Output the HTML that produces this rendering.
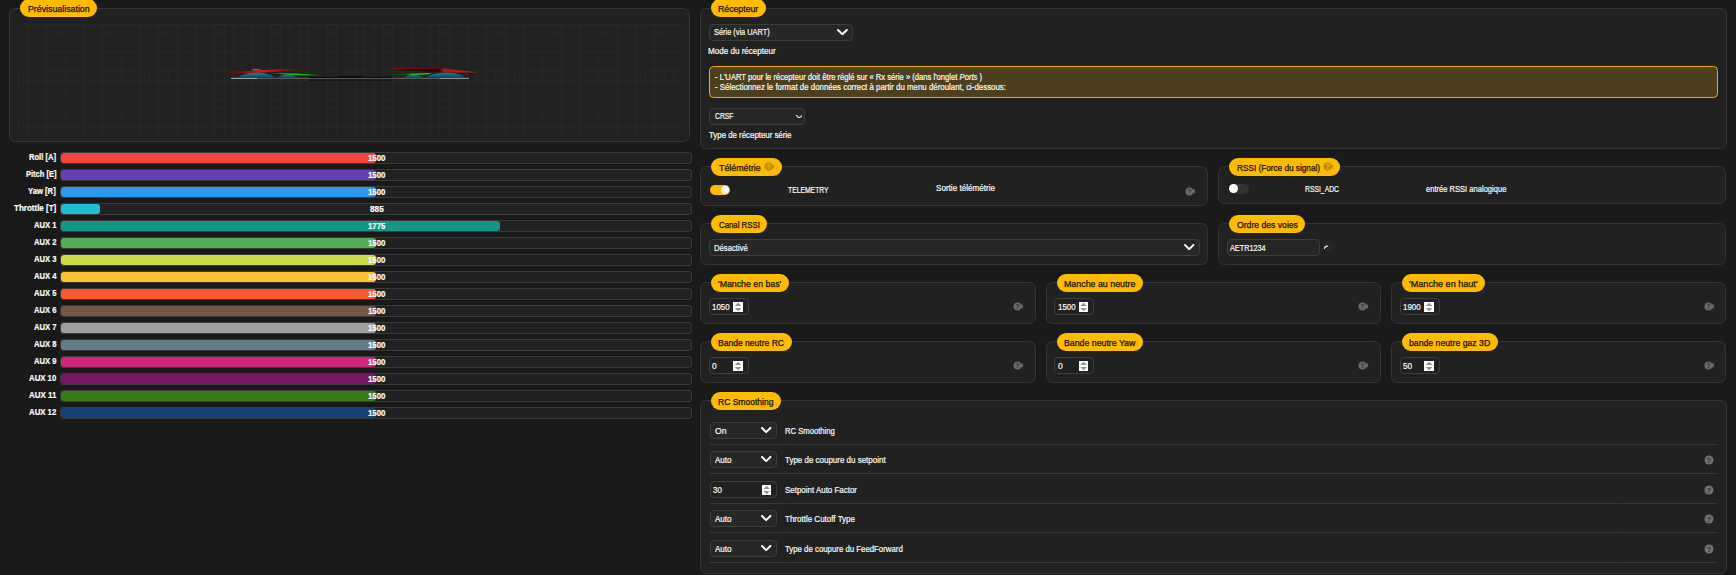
<!DOCTYPE html>
<html lang="fr"><head><meta charset="utf-8"><title>Récepteur</title><style>
*{box-sizing:border-box;margin:0;padding:0}
html,body{width:1736px;height:575px;overflow:hidden;background:#191919;color:#fff;
 font-family:"Liberation Sans","DejaVu Sans",sans-serif;font-size:8.4px;}
body{position:relative}
div,span,svg{position:absolute}
.box{background:#212121;border:1px solid #343434;border-radius:6.5px}
.lbl{background:#ffbb00;border-radius:9.2px}
.t{white-space:nowrap;transform-origin:0 50%;color:#fafafa;-webkit-text-stroke:0.2px #fafafa}
.lt{color:#171000;-webkit-text-stroke:0.25px #171000}
.sel{background:#272727;border:1px solid #3d3d3d;border-radius:4px}
.num{background:#212121;border:1px solid #3d3d3d;border-radius:4px}
.spin{background:#fff}
.note{background:#4d3e1c;border:1px solid #f0ae00;border-radius:4.5px}
.track{background:#212121;border:1px solid #3a3a3a;border-radius:3px}
.fill{left:0;top:0;height:10px;border-radius:3px}
.hr{height:1px;background:#393939}
.tog{border-radius:5px}
.tog i{position:absolute;border-radius:50%;background:#fff}
</style></head><body>
<div class="box" style="left:9px;top:8px;width:681px;height:134px;"></div>
<div style="left:18px;top:24px;width:664.6px;height:110.5px;background-image:linear-gradient(to right,#272727 1px,transparent 1px),linear-gradient(to bottom,#272727 1px,transparent 1px);background-size:9.36px 9.36px"></div>
<svg style="left:200px;top:40px" width="300" height="70" viewBox="200 40 300 70">
<defs>
<linearGradient id="gl" x1="0" x2="1" y1="0" y2="0"><stop offset="0" stop-color="#5a0606"/><stop offset=".3" stop-color="#a80f0f"/><stop offset=".45" stop-color="#d61a1a"/><stop offset=".7" stop-color="#b01010"/><stop offset="1" stop-color="#4a0505"/></linearGradient>
<linearGradient id="gr" x1="0" x2="1" y1="0" y2="0"><stop offset="0" stop-color="#7a0a0a"/><stop offset=".12" stop-color="#3a0404"/><stop offset=".55" stop-color="#1c0000"/><stop offset=".6" stop-color="#b81212"/><stop offset="1" stop-color="#cc1616"/></linearGradient>
<linearGradient id="gg1" x1="0" x2="1" y1="0" y2="0"><stop offset="0" stop-color="#0a4a0a"/><stop offset=".3" stop-color="#12b812"/><stop offset=".75" stop-color="#14c414"/><stop offset="1" stop-color="#0a500a"/></linearGradient>
<linearGradient id="gg2" x1="0" x2="1" y1="0" y2="0"><stop offset="0" stop-color="#083808"/><stop offset=".5" stop-color="#0a560a"/><stop offset=".62" stop-color="#16c416"/><stop offset="1" stop-color="#18c818"/></linearGradient>
<linearGradient id="gb" x1="0" x2="0" y1="0" y2="1"><stop offset="0" stop-color="#1d7c9a"/><stop offset="1" stop-color="#0d4c63"/></linearGradient>
</defs>
<rect x="231" y="77.9" width="238" height="0.9" fill="#6c6c6c"/>
<rect x="231" y="77.9" width="26" height="0.9" fill="#b4b4b4"/>
<rect x="440" y="77.9" width="29" height="0.9" fill="#a0a0a0"/>
<rect x="309" y="76.9" width="83" height="1.1" fill="#070707"/>
<rect x="340" y="76.3" width="22" height="1.2" fill="#040404"/>
<rect x="309" y="79.7" width="83" height="0.9" fill="#0a0a0a"/>
<path d="M238 77.6 C240 75.5 248 72.6 256.500 72.6 C265 72.6 273 75.500 275 77.6 Z" fill="url(#gb)"/>
<path d="M277 77.7 Q287.500 70.6 298 77.7 Z" fill="url(#gb)"/>
<ellipse cx="256" cy="69.8" rx="4.2" ry="1.1" fill="#1d7c9a"/>
<path d="M403 77.7 Q413.500 72.0 424 77.7 Z" fill="url(#gb)"/>
<path d="M426 77.6 C428 75.5 437 72.6 446 72.6 C455 72.6 463 75.500 465 77.6 Z" fill="url(#gb)"/>
<ellipse cx="445.500" cy="69.8" rx="4.5" ry="1.1" fill="#1d7c9a"/>
<path d="M269 73 L296 73.6 L320.500 75.1 L320.500 75.5 L290 75 Z" fill="url(#gg1)"/>
<path d="M381 74.8 L410 73.6 L432 72.9 L428 74.6 L405 75.3 Z" fill="url(#gg2)"/>
<path d="M225 72.4 L256 70.3 L307.500 68.6 L307.500 69 L262 72.6 L240 73 Z" fill="url(#gl)"/>
<path d="M390 68.4 L440 68.1 L479 72.5 L462 72.5 L440 72.2 L402 70.3 Z" fill="url(#gr)"/>
<path d="M390 68.3 L440 68 L441 68.6 L392 68.9 Z" fill="#a01010"/>
</svg>
<div class="lbl" style="left:20px;top:-1.3px;width:77px;height:18.3px;"></div>
<span class="t lt" style="left:27.65px;top:2.9px;line-height:12px;font-size:8.3px;transform:scaleX(1.0606);">Prévisualisation</span>
<span class="t" style="left:29px;top:151px;line-height:12px;font-size:8.3px;transform:scaleX(0.9152);font-weight:700;color:#fff;">Roll [A]</span>
<div class="track" style="left:60px;top:152px;width:632px;height:12px"><div class="fill" style="width:315.0px;background:#f1453d"></div></div>
<span class="t" style="left:367.65px;top:152.2px;line-height:12px;font-size:8.3px;transform:scaleX(0.9425);font-weight:700;color:#fff;">1500</span>
<span class="t" style="left:25.5px;top:168px;line-height:12px;font-size:8.3px;transform:scaleX(0.9061);font-weight:700;color:#fff;">Pitch [E]</span>
<div class="track" style="left:60px;top:169px;width:632px;height:12px"><div class="fill" style="width:315.0px;background:#673fb4"></div></div>
<span class="t" style="left:367.65px;top:169.2px;line-height:12px;font-size:8.3px;transform:scaleX(0.9425);font-weight:700;color:#fff;">1500</span>
<span class="t" style="left:28.3px;top:185px;line-height:12px;font-size:8.3px;transform:scaleX(0.9240);font-weight:700;color:#fff;">Yaw [R]</span>
<div class="track" style="left:60px;top:186px;width:632px;height:12px"><div class="fill" style="width:315.0px;background:#2b98f0"></div></div>
<span class="t" style="left:367.65px;top:186.2px;line-height:12px;font-size:8.3px;transform:scaleX(0.9425);font-weight:700;color:#fff;">1500</span>
<span class="t" style="left:13.7px;top:202px;line-height:12px;font-size:8.3px;transform:scaleX(0.9660);font-weight:700;color:#fff;">Throttle [T]</span>
<div class="track" style="left:60px;top:203px;width:632px;height:12px"><div class="fill" style="width:39.2px;background:#1fbcd2"></div></div>
<span class="t" style="left:369.5px;top:203.2px;line-height:12px;font-size:8.3px;transform:scaleX(0.9894);font-weight:700;color:#fff;">885</span>
<span class="t" style="left:33.5px;top:219px;line-height:12px;font-size:8.3px;transform:scaleX(0.9204);font-weight:700;color:#fff;">AUX 1</span>
<div class="track" style="left:60px;top:220px;width:632px;height:12px"><div class="fill" style="width:438.7px;background:#159588"></div></div>
<span class="t" style="left:367.65px;top:220.2px;line-height:12px;font-size:8.3px;transform:scaleX(0.9425);font-weight:700;color:#fff;">1775</span>
<span class="t" style="left:33.5px;top:236px;line-height:12px;font-size:8.3px;transform:scaleX(0.9204);font-weight:700;color:#fff;">AUX 2</span>
<div class="track" style="left:60px;top:237px;width:632px;height:12px"><div class="fill" style="width:315.0px;background:#50ae55"></div></div>
<span class="t" style="left:367.65px;top:237.2px;line-height:12px;font-size:8.3px;transform:scaleX(0.9425);font-weight:700;color:#fff;">1500</span>
<span class="t" style="left:33.5px;top:253px;line-height:12px;font-size:8.3px;transform:scaleX(0.9204);font-weight:700;color:#fff;">AUX 3</span>
<div class="track" style="left:60px;top:254px;width:632px;height:12px"><div class="fill" style="width:315.0px;background:#cdda49"></div></div>
<span class="t" style="left:367.65px;top:254.2px;line-height:12px;font-size:8.3px;transform:scaleX(0.9425);font-weight:700;color:#fff;">1500</span>
<span class="t" style="left:33.5px;top:270px;line-height:12px;font-size:8.3px;transform:scaleX(0.9204);font-weight:700;color:#fff;">AUX 4</span>
<div class="track" style="left:60px;top:271px;width:632px;height:12px"><div class="fill" style="width:315.0px;background:#fdc02f"></div></div>
<span class="t" style="left:367.65px;top:271.2px;line-height:12px;font-size:8.3px;transform:scaleX(0.9425);font-weight:700;color:#fff;">1500</span>
<span class="t" style="left:33.5px;top:287px;line-height:12px;font-size:8.3px;transform:scaleX(0.9204);font-weight:700;color:#fff;">AUX 5</span>
<div class="track" style="left:60px;top:288px;width:632px;height:12px"><div class="fill" style="width:315.0px;background:#fc5830"></div></div>
<span class="t" style="left:367.65px;top:288.2px;line-height:12px;font-size:8.3px;transform:scaleX(0.9425);font-weight:700;color:#fff;">1500</span>
<span class="t" style="left:33.5px;top:304px;line-height:12px;font-size:8.3px;transform:scaleX(0.9204);font-weight:700;color:#fff;">AUX 6</span>
<div class="track" style="left:60px;top:305px;width:632px;height:12px"><div class="fill" style="width:315.0px;background:#785549"></div></div>
<span class="t" style="left:367.65px;top:305.2px;line-height:12px;font-size:8.3px;transform:scaleX(0.9425);font-weight:700;color:#fff;">1500</span>
<span class="t" style="left:33.5px;top:321px;line-height:12px;font-size:8.3px;transform:scaleX(0.9204);font-weight:700;color:#fff;">AUX 7</span>
<div class="track" style="left:60px;top:322px;width:632px;height:12px"><div class="fill" style="width:315.0px;background:#9e9e9e"></div></div>
<span class="t" style="left:367.65px;top:322.2px;line-height:12px;font-size:8.3px;transform:scaleX(0.9425);font-weight:700;color:#fff;">1500</span>
<span class="t" style="left:33.5px;top:338px;line-height:12px;font-size:8.3px;transform:scaleX(0.9204);font-weight:700;color:#fff;">AUX 8</span>
<div class="track" style="left:60px;top:339px;width:632px;height:12px"><div class="fill" style="width:315.0px;background:#617d8a"></div></div>
<span class="t" style="left:367.65px;top:339.2px;line-height:12px;font-size:8.3px;transform:scaleX(0.9425);font-weight:700;color:#fff;">1500</span>
<span class="t" style="left:33.5px;top:355px;line-height:12px;font-size:8.3px;transform:scaleX(0.9204);font-weight:700;color:#fff;">AUX 9</span>
<div class="track" style="left:60px;top:356px;width:632px;height:12px"><div class="fill" style="width:315.0px;background:#cf267d"></div></div>
<span class="t" style="left:367.65px;top:356.2px;line-height:12px;font-size:8.3px;transform:scaleX(0.9425);font-weight:700;color:#fff;">1500</span>
<span class="t" style="left:28.7px;top:372px;line-height:12px;font-size:8.3px;transform:scaleX(0.9394);font-weight:700;color:#fff;">AUX 10</span>
<div class="track" style="left:60px;top:373px;width:632px;height:12px"><div class="fill" style="width:315.0px;background:#7a1464"></div></div>
<span class="t" style="left:367.65px;top:373.2px;line-height:12px;font-size:8.3px;transform:scaleX(0.9425);font-weight:700;color:#fff;">1500</span>
<span class="t" style="left:28.7px;top:389px;line-height:12px;font-size:8.3px;transform:scaleX(0.9544);font-weight:700;color:#fff;">AUX 11</span>
<div class="track" style="left:60px;top:390px;width:632px;height:12px"><div class="fill" style="width:315.0px;background:#3a7a14"></div></div>
<span class="t" style="left:367.65px;top:390.2px;line-height:12px;font-size:8.3px;transform:scaleX(0.9425);font-weight:700;color:#fff;">1500</span>
<span class="t" style="left:28.7px;top:406px;line-height:12px;font-size:8.3px;transform:scaleX(0.9394);font-weight:700;color:#fff;">AUX 12</span>
<div class="track" style="left:60px;top:407px;width:632px;height:12px"><div class="fill" style="width:315.0px;background:#14407a"></div></div>
<span class="t" style="left:367.65px;top:407.2px;line-height:12px;font-size:8.3px;transform:scaleX(0.9425);font-weight:700;color:#fff;">1500</span>
<div class="box" style="left:700px;top:8px;width:1027px;height:141px;"></div>
<div class="lbl" style="left:710.8px;top:-1.3px;width:55.4px;height:18.3px;"></div>
<span class="t lt" style="left:718.35px;top:2.9px;line-height:12px;font-size:8.3px;transform:scaleX(1.0511);">Récepteur</span>
<div class="sel" style="left:709px;top:24px;width:144px;height:17px;"></div>
<span class="t" style="left:713.7px;top:26.4px;line-height:12px;font-size:8.4px;transform:scaleX(0.8828);">Série (via UART)</span>
<svg style="left:837px;top:29.2px" width="10.8" height="6.2" viewBox="0 0 10.8 6.2"><path d="M0.95 0.95 L5.4 5.25 L9.85 0.95" fill="none" stroke="#fff" stroke-width="1.9" stroke-linecap="round" stroke-linejoin="round"/></svg>
<span class="t" style="left:708.4px;top:44.6px;line-height:12px;font-size:8.4px;transform:scaleX(0.9631);">Mode du récepteur</span>
<div class="note" style="left:709px;top:66px;width:1009px;height:32px;"></div>
<span class="t" style="left:714.5px;top:71.6px;line-height:10px;font-size:8.4px;transform:scaleX(0.9117);">- L'UART pour le récepteur doit être réglé sur « Rx série » (dans l'onglet <i>Ports</i> )</span>
<span class="t" style="left:714.5px;top:81.8px;line-height:10px;font-size:8.4px;transform:scaleX(0.9398);">- Sélectionnez le format de données correct à partir du menu déroulant, ci-dessous:</span>
<div class="sel" style="left:709px;top:108px;width:96px;height:17px;"></div>
<span class="t" style="left:714.5px;top:110.4px;line-height:12px;font-size:8.4px;transform:scaleX(0.8090);">CRSF</span>
<svg style="left:795.8px;top:114.6px" width="6.4" height="3.8" viewBox="0 0 6.4 3.8"><path d="M0.6 0.6 L3.2 3.2 L5.8 0.6" fill="none" stroke="#e6e6e6" stroke-width="1.2" stroke-linecap="round" stroke-linejoin="round"/></svg>
<span class="t" style="left:708.5px;top:128.8px;line-height:12px;font-size:8.4px;transform:scaleX(0.9372);">Type de récepteur série</span>
<div class="box" style="left:700px;top:166px;width:508px;height:40px;"></div>
<div class="lbl" style="left:710.8px;top:157.8px;width:71.3px;height:18.3px;"></div>
<span class="t lt" style="left:718.55px;top:162px;line-height:12px;font-size:8.3px;transform:scaleX(1.0650);">Télémétrie</span>
<svg style="left:764.2px;top:162.35px" width="12.2" height="9.2" viewBox="-4.6 -4.6 12.2 9.2"><circle r="4.1" fill="#c08c00"/><path d="M2.9 -1.43 L5.8 -2.25 L5.5 2.25 L2.9 1.43 Z" fill="#c08c00"/><text x="0" y="2.54" text-anchor="middle" font-family="Liberation Sans, sans-serif" font-weight="700" font-size="6.72" fill="#ffbb00">?</text></svg>
<div class="tog" style="left:709.8px;top:184.8px;width:20.3px;height:10.2px;background:#ffbb00"><i style="left:11px;top:0.8px;width:8.6px;height:8.6px"></i></div>
<span class="t" style="left:787.8px;top:184.1px;line-height:12px;font-size:8.4px;transform:scaleX(0.8099);">TELEMETRY</span>
<span class="t" style="left:936.3px;top:181.9px;line-height:12px;font-size:8.4px;transform:scaleX(0.9680);">Sortie télémétrie</span>
<svg style="left:1185.15px;top:186.75px" width="11.9" height="8.9" viewBox="-4.45 -4.45 11.9 8.9"><circle r="3.95" fill="#6a6a6a"/><path d="M2.75 -1.38 L5.65 -2.17 L5.35 2.17 L2.75 1.38 Z" fill="#6a6a6a"/><text x="0" y="2.45" text-anchor="middle" font-family="Liberation Sans, sans-serif" font-weight="700" font-size="6.48" fill="#333">?</text></svg>
<div class="box" style="left:1218px;top:166px;width:508px;height:38px;"></div>
<div class="lbl" style="left:1228.9px;top:157.8px;width:111.2px;height:18.3px;"></div>
<span class="t lt" style="left:1236.75px;top:162px;line-height:12px;font-size:8.3px;transform:scaleX(0.9893);">RSSI (Force du signal)</span>
<svg style="left:1323px;top:162.35px" width="12.2" height="9.2" viewBox="-4.6 -4.6 12.2 9.2"><circle r="4.1" fill="#c08c00"/><path d="M2.9 -1.43 L5.8 -2.25 L5.5 2.25 L2.9 1.43 Z" fill="#c08c00"/><text x="0" y="2.54" text-anchor="middle" font-family="Liberation Sans, sans-serif" font-weight="700" font-size="6.72" fill="#ffbb00">?</text></svg>
<div class="tog" style="left:1228.9px;top:184.2px;width:20px;height:9.6px;background:#323232"><i style="left:0;top:0.3px;width:9px;height:9px"></i></div>
<span class="t" style="left:1304.6px;top:182.9px;line-height:12px;font-size:8.4px;transform:scaleX(0.8117);">RSSI_ADC</span>
<span class="t" style="left:1426.4px;top:182.7px;line-height:12px;font-size:8.4px;transform:scaleX(0.9037);">entrée RSSI analogique</span>
<div class="box" style="left:700px;top:223px;width:508px;height:42px;"></div>
<div class="lbl" style="left:710.9px;top:214.9px;width:56.2px;height:18.3px;"></div>
<span class="t lt" style="left:718.55px;top:219.1px;line-height:12px;font-size:8.3px;transform:scaleX(0.9420);">Canal RSSI</span>
<div class="sel" style="left:709px;top:239px;width:491px;height:17px;"></div>
<span class="t" style="left:714.3px;top:241.8px;line-height:12px;font-size:8.4px;transform:scaleX(0.9192);">Désactivé</span>
<svg style="left:1184.3px;top:244.2px" width="10.4" height="6.2" viewBox="0 0 10.4 6.2"><path d="M0.95 0.95 L5.2 5.25 L9.45 0.95" fill="none" stroke="#fff" stroke-width="1.9" stroke-linecap="round" stroke-linejoin="round"/></svg>
<div class="box" style="left:1218px;top:223px;width:508px;height:42px;"></div>
<div class="lbl" style="left:1228.9px;top:214.9px;width:76px;height:18.3px;"></div>
<span class="t lt" style="left:1236.75px;top:219.1px;line-height:12px;font-size:8.3px;transform:scaleX(1.0404);">Ordre des voies</span>
<div class="num" style="left:1227px;top:239px;width:93px;height:17px;background:#262626"></div>
<span class="t" style="left:1230.2px;top:241.8px;line-height:12px;font-size:8.4px;transform:scaleX(0.8689);">AETR1234</span>
<svg style="left:1322px;top:240px" width="14" height="14" viewBox="1322 240 14 14"><circle cx="1328.600" cy="246.900" r="5.600" fill="#262626"/><path d="M1323.800 248.400 Q1324.200 245.800 1327.600 245.200 L1327.900 246.600 Q1325.600 247.200 1324.200 249.300 Z" fill="#f0f0f0"/></svg>
<div class="box" style="left:700px;top:282px;width:336px;height:42px;"></div>
<div class="lbl" style="left:710.9px;top:273.7px;width:78px;height:18.3px;"></div>
<span class="t lt" style="left:718.35px;top:277.9px;line-height:12px;font-size:8.3px;transform:scaleX(1.0556);">'Manche en bas'</span>
<div class="num" style="left:709px;top:298px;width:40px;height:17px;"></div>
<span class="t" style="left:712.1px;top:300.8px;line-height:12px;font-size:8.4px;transform:scaleX(0.9473);">1050</span>
<div class="spin" style="left:732.9px;top:302px;width:10.2px;height:10px;"></div>
<svg style="left:732.9px;top:302px" width="10.2" height="10" viewBox="0 0 10.2 10"><path d="M1.8 3.9 L5.1 0.7 L8.4 3.9 Z M1.8 6 L5.1 9.2 L8.4 6 Z" fill="#929292"/></svg>
<svg style="left:1013.35px;top:302.45px" width="11.9" height="8.9" viewBox="-4.45 -4.45 11.9 8.9"><circle r="3.95" fill="#6a6a6a"/><path d="M2.75 -1.38 L5.65 -2.17 L5.35 2.17 L2.75 1.38 Z" fill="#6a6a6a"/><text x="0" y="2.45" text-anchor="middle" font-family="Liberation Sans, sans-serif" font-weight="700" font-size="6.48" fill="#333">?</text></svg>
<div class="box" style="left:1046px;top:282px;width:335px;height:42px;"></div>
<div class="lbl" style="left:1057px;top:273.7px;width:86.1px;height:18.3px;"></div>
<span class="t lt" style="left:1064.45px;top:277.9px;line-height:12px;font-size:8.3px;transform:scaleX(1.0665);">Manche au neutre</span>
<div class="num" style="left:1054px;top:298px;width:40px;height:17px;"></div>
<span class="t" style="left:1057.8px;top:300.8px;line-height:12px;font-size:8.4px;transform:scaleX(0.9473);">1500</span>
<div class="spin" style="left:1078.8px;top:302px;width:9.2px;height:10px;"></div>
<svg style="left:1078.8px;top:302px" width="9.2" height="10" viewBox="0 0 9.2 10"><path d="M1.3 3.9 L4.6 0.7 L7.9 3.9 Z M1.3 6 L4.6 9.2 L7.9 6 Z" fill="#929292"/></svg>
<svg style="left:1358.45px;top:302.45px" width="11.9" height="8.9" viewBox="-4.45 -4.45 11.9 8.9"><circle r="3.95" fill="#6a6a6a"/><path d="M2.75 -1.38 L5.65 -2.17 L5.35 2.17 L2.75 1.38 Z" fill="#6a6a6a"/><text x="0" y="2.45" text-anchor="middle" font-family="Liberation Sans, sans-serif" font-weight="700" font-size="6.48" fill="#333">?</text></svg>
<div class="box" style="left:1391px;top:282px;width:335px;height:42px;"></div>
<div class="lbl" style="left:1402px;top:273.7px;width:83.4px;height:18.3px;"></div>
<span class="t lt" style="left:1409.45px;top:277.9px;line-height:12px;font-size:8.3px;transform:scaleX(1.0951);">'Manche en haut'</span>
<div class="num" style="left:1400px;top:298px;width:40px;height:17px;"></div>
<span class="t" style="left:1403px;top:300.8px;line-height:12px;font-size:8.4px;transform:scaleX(0.9473);">1900</span>
<div class="spin" style="left:1423.8px;top:302px;width:10.2px;height:10px;"></div>
<svg style="left:1423.8px;top:302px" width="10.2" height="10" viewBox="0 0 10.2 10"><path d="M1.8 3.9 L5.1 0.7 L8.4 3.9 Z M1.8 6 L5.1 9.2 L8.4 6 Z" fill="#929292"/></svg>
<svg style="left:1704.15px;top:302.45px" width="11.9" height="8.9" viewBox="-4.45 -4.45 11.9 8.9"><circle r="3.95" fill="#6a6a6a"/><path d="M2.75 -1.38 L5.65 -2.17 L5.35 2.17 L2.75 1.38 Z" fill="#6a6a6a"/><text x="0" y="2.45" text-anchor="middle" font-family="Liberation Sans, sans-serif" font-weight="700" font-size="6.48" fill="#333">?</text></svg>
<div class="box" style="left:700px;top:341px;width:336px;height:42px;"></div>
<div class="lbl" style="left:710.9px;top:332.7px;width:80.8px;height:18.3px;"></div>
<span class="t lt" style="left:718.35px;top:336.9px;line-height:12px;font-size:8.3px;transform:scaleX(1.0299);">Bande neutre RC</span>
<div class="num" style="left:709px;top:357px;width:40px;height:17px;"></div>
<span class="t" style="left:712.1px;top:359.8px;line-height:12px;font-size:8.4px;transform:scaleX(1.0062);">0</span>
<div class="spin" style="left:732.9px;top:361px;width:10.2px;height:10px;"></div>
<svg style="left:732.9px;top:361px" width="10.2" height="10" viewBox="0 0 10.2 10"><path d="M1.8 3.9 L5.1 0.7 L8.4 3.9 Z M1.8 6 L5.1 9.2 L8.4 6 Z" fill="#929292"/></svg>
<svg style="left:1013.35px;top:361.45px" width="11.9" height="8.9" viewBox="-4.45 -4.45 11.9 8.9"><circle r="3.95" fill="#6a6a6a"/><path d="M2.75 -1.38 L5.65 -2.17 L5.35 2.17 L2.75 1.38 Z" fill="#6a6a6a"/><text x="0" y="2.45" text-anchor="middle" font-family="Liberation Sans, sans-serif" font-weight="700" font-size="6.48" fill="#333">?</text></svg>
<div class="box" style="left:1046px;top:341px;width:335px;height:42px;"></div>
<div class="lbl" style="left:1057px;top:332.7px;width:86.1px;height:18.3px;"></div>
<span class="t lt" style="left:1064.45px;top:336.9px;line-height:12px;font-size:8.3px;transform:scaleX(1.0567);">Bande neutre Yaw</span>
<div class="num" style="left:1054px;top:357px;width:40px;height:17px;"></div>
<span class="t" style="left:1057.8px;top:359.8px;line-height:12px;font-size:8.4px;transform:scaleX(1.0062);">0</span>
<div class="spin" style="left:1078.8px;top:361px;width:9.2px;height:10px;"></div>
<svg style="left:1078.8px;top:361px" width="9.2" height="10" viewBox="0 0 9.2 10"><path d="M1.3 3.9 L4.6 0.7 L7.9 3.9 Z M1.3 6 L4.6 9.2 L7.9 6 Z" fill="#929292"/></svg>
<svg style="left:1358.45px;top:361.45px" width="11.9" height="8.9" viewBox="-4.45 -4.45 11.9 8.9"><circle r="3.95" fill="#6a6a6a"/><path d="M2.75 -1.38 L5.65 -2.17 L5.35 2.17 L2.75 1.38 Z" fill="#6a6a6a"/><text x="0" y="2.45" text-anchor="middle" font-family="Liberation Sans, sans-serif" font-weight="700" font-size="6.48" fill="#333">?</text></svg>
<div class="box" style="left:1391px;top:341px;width:335px;height:42px;"></div>
<div class="lbl" style="left:1402px;top:332.7px;width:96px;height:18.3px;"></div>
<span class="t lt" style="left:1409.45px;top:336.9px;line-height:12px;font-size:8.3px;transform:scaleX(1.0481);">bande neutre gaz 3D</span>
<div class="num" style="left:1400px;top:357px;width:40px;height:17px;"></div>
<span class="t" style="left:1403px;top:359.8px;line-height:12px;font-size:8.4px;transform:scaleX(0.9848);">50</span>
<div class="spin" style="left:1423.8px;top:361px;width:10.2px;height:10px;"></div>
<svg style="left:1423.8px;top:361px" width="10.2" height="10" viewBox="0 0 10.2 10"><path d="M1.8 3.9 L5.1 0.7 L8.4 3.9 Z M1.8 6 L5.1 9.2 L8.4 6 Z" fill="#929292"/></svg>
<svg style="left:1704.15px;top:361.45px" width="11.9" height="8.9" viewBox="-4.45 -4.45 11.9 8.9"><circle r="3.95" fill="#6a6a6a"/><path d="M2.75 -1.38 L5.65 -2.17 L5.35 2.17 L2.75 1.38 Z" fill="#6a6a6a"/><text x="0" y="2.45" text-anchor="middle" font-family="Liberation Sans, sans-serif" font-weight="700" font-size="6.48" fill="#333">?</text></svg>
<div class="box" style="left:700px;top:400px;width:1027px;height:174px;"></div>
<div class="lbl" style="left:710.8px;top:391.8px;width:70.4px;height:18.3px;"></div>
<span class="t lt" style="left:718.35px;top:396px;line-height:12px;font-size:8.3px;transform:scaleX(1.0274);">RC Smoothing</span>
<div class="sel" style="left:710px;top:422px;width:67px;height:17px;"></div>
<span class="t" style="left:714.9px;top:424.7px;line-height:12px;font-size:8.4px;transform:scaleX(1.0174);">On</span>
<svg style="left:761.3px;top:426.9px" width="10.4" height="6.1" viewBox="0 0 10.4 6.1"><path d="M1 1 L5.2 5.1 L9.4 1" fill="none" stroke="#fff" stroke-width="2.0" stroke-linecap="round" stroke-linejoin="round"/></svg>
<span class="t" style="left:785.2px;top:424.7px;line-height:12px;font-size:8.4px;transform:scaleX(0.9154);">RC Smoothing</span>
<div class="hr" style="left:710.2px;top:444.2px;width:74.8px"></div>
<div class="hr" style="left:786.3px;top:444.2px;width:930.8px"></div>
<div class="sel" style="left:710px;top:451px;width:67px;height:17px;"></div>
<span class="t" style="left:714.9px;top:454px;line-height:12px;font-size:8.4px;transform:scaleX(0.9607);">Auto</span>
<svg style="left:761.3px;top:456.2px" width="10.4" height="6.1" viewBox="0 0 10.4 6.1"><path d="M1 1 L5.2 5.1 L9.4 1" fill="none" stroke="#fff" stroke-width="2.0" stroke-linecap="round" stroke-linejoin="round"/></svg>
<span class="t" style="left:785.2px;top:454px;line-height:12px;font-size:8.4px;transform:scaleX(0.9519);">Type de coupure du setpoint</span>
<svg style="left:1703.8px;top:455px" width="10" height="10" viewBox="-5 -5 10 10"><circle r="4.5" fill="#707070"/><text x="0" y="2.79" text-anchor="middle" font-family="Liberation Sans, sans-serif" font-weight="700" font-size="7.2" fill="#2c2c2c">?</text></svg>
<div class="hr" style="left:710.2px;top:473px;width:74.8px"></div>
<div class="hr" style="left:786.3px;top:473px;width:835.7px"></div>
<div class="hr" style="left:1623.3px;top:473px;width:93.8px"></div>
<div class="num" style="left:710px;top:481px;width:67px;height:17px;"></div>
<span class="t" style="left:713.2px;top:483.7px;line-height:12px;font-size:8.4px;transform:scaleX(0.9419);">30</span>
<div class="spin" style="left:762px;top:484.5px;width:9.2px;height:10px;"></div>
<svg style="left:762px;top:484.5px" width="9.2" height="10" viewBox="0 0 9.2 10"><path d="M1.3 3.9 L4.6 0.7 L7.9 3.9 Z M1.3 6 L4.6 9.2 L7.9 6 Z" fill="#929292"/></svg>
<span class="t" style="left:785.2px;top:483.7px;line-height:12px;font-size:8.4px;transform:scaleX(0.9487);">Setpoint Auto Factor</span>
<svg style="left:1703.8px;top:484.7px" width="10" height="10" viewBox="-5 -5 10 10"><circle r="4.5" fill="#707070"/><text x="0" y="2.79" text-anchor="middle" font-family="Liberation Sans, sans-serif" font-weight="700" font-size="7.2" fill="#2c2c2c">?</text></svg>
<div class="hr" style="left:710.2px;top:502.6px;width:74.8px"></div>
<div class="hr" style="left:786.3px;top:502.6px;width:835.7px"></div>
<div class="hr" style="left:1623.3px;top:502.6px;width:93.8px"></div>
<div class="sel" style="left:710px;top:510px;width:67px;height:17px;"></div>
<span class="t" style="left:714.9px;top:513.1px;line-height:12px;font-size:8.4px;transform:scaleX(0.9607);">Auto</span>
<svg style="left:761.3px;top:515.3px" width="10.4" height="6.1" viewBox="0 0 10.4 6.1"><path d="M1 1 L5.2 5.1 L9.4 1" fill="none" stroke="#fff" stroke-width="2.0" stroke-linecap="round" stroke-linejoin="round"/></svg>
<span class="t" style="left:785.2px;top:513.1px;line-height:12px;font-size:8.4px;transform:scaleX(0.9557);">Throttle Cutoff Type</span>
<svg style="left:1703.8px;top:514.1px" width="10" height="10" viewBox="-5 -5 10 10"><circle r="4.5" fill="#707070"/><text x="0" y="2.79" text-anchor="middle" font-family="Liberation Sans, sans-serif" font-weight="700" font-size="7.2" fill="#2c2c2c">?</text></svg>
<div class="hr" style="left:710.2px;top:532px;width:74.8px"></div>
<div class="hr" style="left:786.3px;top:532px;width:835.7px"></div>
<div class="hr" style="left:1623.3px;top:532px;width:93.8px"></div>
<div class="sel" style="left:710px;top:540px;width:67px;height:17px;"></div>
<span class="t" style="left:714.9px;top:542.8px;line-height:12px;font-size:8.4px;transform:scaleX(0.9607);">Auto</span>
<svg style="left:761.3px;top:545px" width="10.4" height="6.1" viewBox="0 0 10.4 6.1"><path d="M1 1 L5.2 5.1 L9.4 1" fill="none" stroke="#fff" stroke-width="2.0" stroke-linecap="round" stroke-linejoin="round"/></svg>
<span class="t" style="left:785.2px;top:542.8px;line-height:12px;font-size:8.4px;transform:scaleX(0.9334);">Type de coupure du FeedForward</span>
<svg style="left:1703.8px;top:543.8px" width="10" height="10" viewBox="-5 -5 10 10"><circle r="4.5" fill="#707070"/><text x="0" y="2.79" text-anchor="middle" font-family="Liberation Sans, sans-serif" font-weight="700" font-size="7.2" fill="#2c2c2c">?</text></svg>
<div class="hr" style="left:710.2px;top:562px;width:74.8px"></div>
<div class="hr" style="left:786.3px;top:562px;width:835.7px"></div>
<div class="hr" style="left:1623.3px;top:562px;width:93.8px"></div>
</body></html>
